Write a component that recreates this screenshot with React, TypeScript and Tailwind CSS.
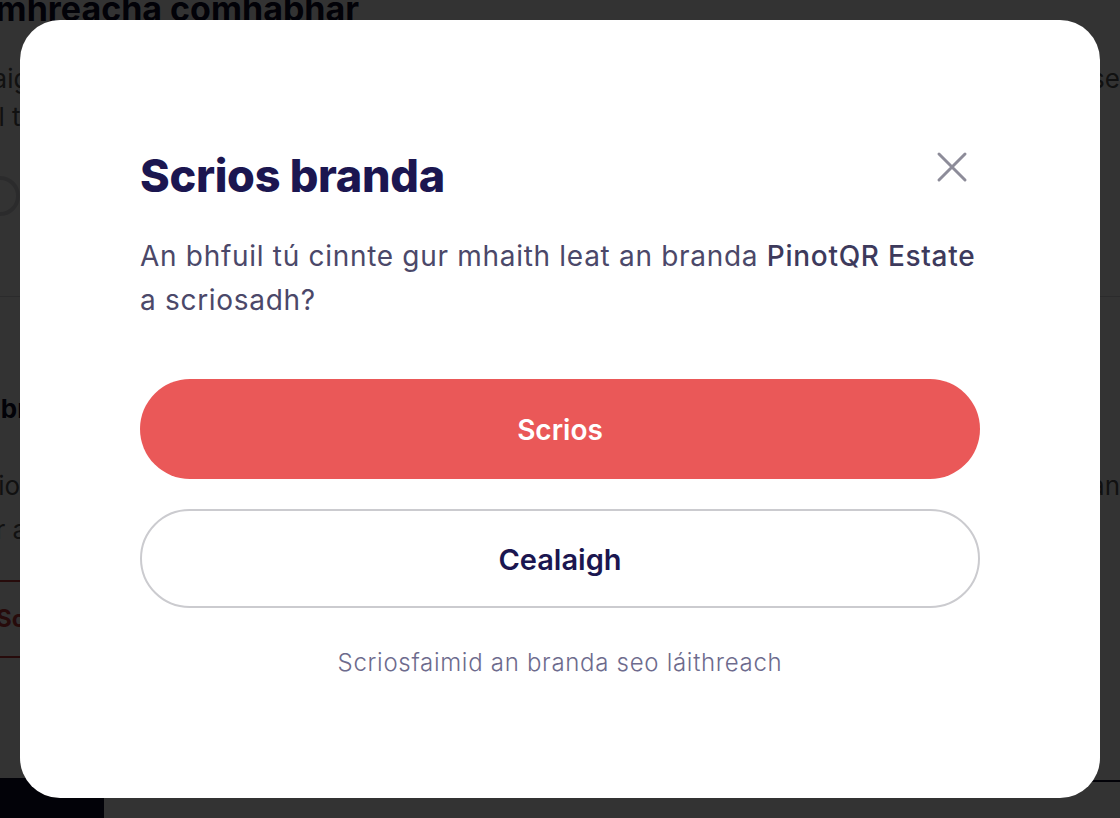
import React from 'react';

const BackgroundPage: React.FC = () => {
  return (
    <div className="h-[818px] bg-white text-[#0e0c2a] overflow-hidden">
      <div className="-ml-[86px]">
        <h1 className="text-[34px] font-bold leading-none -mt-[8px]">Sainimhreacha comhábhar</h1>
        <div className="flex justify-between mt-[34px] text-[26px] text-[#555]">
          <p className="leading-[38px]">Roghnaigh na comhábhair<br />a bhfuil tú ag úsáid</p>
          <p className="leading-[38px]">Sonraí breise</p>
        </div>
        <div className="ml-[66px] mt-[40px] w-[40px] h-[40px] rounded-full border-4 border-[#d8d8dc]" />
        <div className="mt-[80px] border-t border-[#d8d8dc]" />
        <h2 className="mt-[92px] text-[26px] font-bold">Scrios branda</h2>
        <div className="flex justify-between mt-[36px] text-[26px] text-[#555] leading-[44px]">
          <p>Má scriosann tú d'bhranda<br />ní féidir an gníomh seo a chealú</p>
          <p>Sonraí an</p>
        </div>
        <div className="mt-[28px] w-[200px] h-[78px] border-2 border-[#c03a3a] rounded-[6px] flex items-center pl-[80px] text-[24px] font-bold text-[#c03a3a]">
          Scrios
        </div>
      </div>
      <div className="mt-[120px] flex items-start">
        <div className="w-[104px] h-[60px] bg-[#0e0c2a]" />
        <div className="flex-1 mt-[2px] border-t-2 border-[#0e0c2a]" />
      </div>
    </div>
  );
};

const DeleteBrandModal: React.FC = () => {
  return (
    <div className="w-[1080px] h-[778px] bg-white rounded-[40px] px-[120px] pt-[132px] flex flex-col">
      <div className="flex items-start justify-between">
        <h2 className="text-[45px] leading-[48px] font-extrabold text-[#1b1650] tracking-[-0.3px]">Scrios branda</h2>
        <button className="-mt-[7px] mr-[6px] w-[44px] h-[44px] flex items-center justify-center text-[#8d8c99]">
          <svg width="32" height="32" viewBox="0 0 32 32" fill="none" stroke="currentColor" strokeWidth="3" strokeLinecap="round">
            <path d="M3 3L29 29M29 3L3 29" />
          </svg>
        </button>
      </div>
      <p className="mt-[34px] text-[28px] leading-[44px] tracking-[0.7px] text-[#4b4869]">
        An bhfuil tú cinnte gur mhaith leat an branda{' '}
        <span className="font-medium text-[#3d3a5c]">PinotQR Estate</span> a scriosadh?
      </p>
      <button className="mt-[57px] h-[100px] pt-[2px] rounded-full bg-[#ea5858] text-white text-[28px] font-semibold">
        Scrios
      </button>
      <button className="mt-[30px] h-[99px] pt-[2px] rounded-full border-2 border-[#cbcbcf] text-[#1b1650] text-[29px] font-semibold">
        Cealaigh
      </button>
      <p className="mt-[40px] text-center text-[24px] leading-[30px] tracking-[0.7px] font-light text-[#6d6b8d]">
        Scriosfaimid an branda seo láithreach
      </p>
    </div>
  );
};

export default function App() {
  return (
    <div className="relative h-[818px] w-[1120px] overflow-hidden font-['Inter',sans-serif]">
      <BackgroundPage />
      <div className="absolute inset-0 bg-black/80 flex items-center justify-center">
        <DeleteBrandModal />
      </div>
    </div>
  );
}
